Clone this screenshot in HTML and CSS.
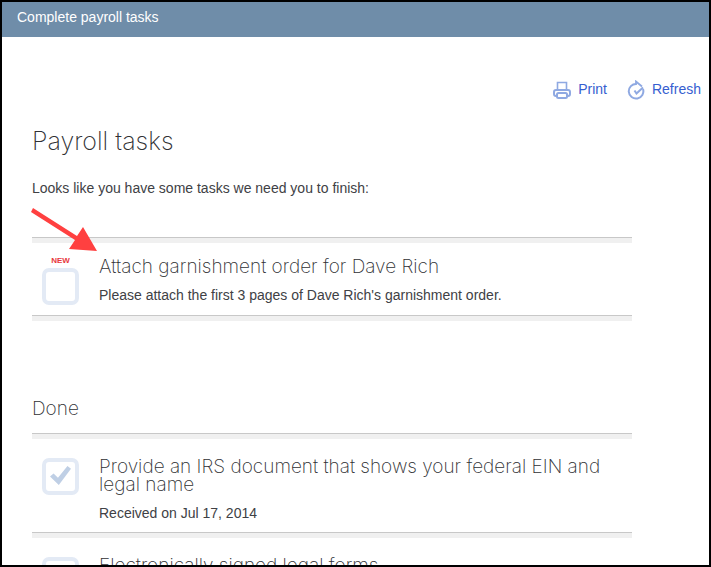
FILE: index.html
```html
<!DOCTYPE html>
<html lang="en">
<head>
    <meta charset="UTF-8">
    <meta name="viewport" content="width=device-width, initial-scale=1.0">
    <title>Complete payroll tasks</title>
    <link rel="stylesheet" href="styles.css">
</head>
<body>
    <header class="title-bar">Complete payroll tasks</header>

    <main>
        <nav class="actions">
            <a href="#print">
                <svg width="18" height="18" viewBox="0 0 18 18" fill="none" stroke="#8fa9e2" stroke-width="2">
                    <path d="M4.500 8V1.500h9V8" stroke-width="1.600"/>
                    <path d="M4 15H3a2 2 0 0 1-2-2v-2a2 2 0 0 1 2-2h12a2 2 0 0 1 2 2v2a2 2 0 0 1-2 2h-1"/>
                    <rect x="4" y="12" width="10" height="5" rx="1.500" fill="#fff"/>
                </svg>
                Print
            </a>
            <a href="#refresh">
                <svg width="18" height="20" viewBox="0 0 18 20" fill="none" stroke="#8fa9e2" stroke-width="2">
                    <path d="M9.500 4A7.300 7.300 0 1 0 16 9"/>
                    <path d="M8.500 1.500L14 6l-4 2z" fill="#fff" stroke="none"/>
                    <path d="M9 5V1.500L15 6.500" stroke-width="1.800"/>
                    <path d="M7.500 10.500l2 3L16 7.500"/>
                </svg>
                Refresh
            </a>
        </nav>

        <h1>Payroll tasks</h1>
        <p class="intro">Looks like you have some tasks we need you to finish:</p>

        <section class="task-list open-tasks">
            <article class="task">
                <div class="task-check">
                    <span class="badge">NEW</span>
                    <input type="checkbox" id="task-garnishment">
                </div>
                <div class="task-text">
                    <h3><label for="task-garnishment">Attach garnishment order for Dave Rich</label></h3>
                    <p>Please attach the first 3 pages of Dave Rich's garnishment order.</p>
                </div>
            </article>
            <svg class="pointer" width="68" height="46" viewBox="0 0 68 46" fill="#ff4040">
                <path d="M3 0l44 28 6-9 14 24-28-2 6-9L1 4z"/>
            </svg>
        </section>

        <h2>Done</h2>

        <section class="task-list">
            <article class="task">
                <div class="task-check">
                    <input type="checkbox" id="task-irs" checked>
                </div>
                <div class="task-text">
                    <h3><label for="task-irs">Provide an IRS document that shows your federal EIN and legal name</label></h3>
                    <p>Received on Jul 17, 2014</p>
                </div>
            </article>
            <article class="task">
                <div class="task-check">
                    <input type="checkbox" id="task-forms" checked>
                </div>
                <div class="task-text">
                    <h3><label for="task-forms">Electronically signed legal forms</label></h3>
                </div>
            </article>
        </section>
    </main>
</body>
</html>
```

FILE: styles.css
```css
* {
    margin: 0;
    padding: 0;
    box-sizing: border-box;
}

body {
    height: 100vh;
    overflow: hidden;
    border: 2px solid #000;
    background: #fff;
    color: #404145;
    font-family: "Liberation Sans", Arial, sans-serif;
    font-size: 14px;
    line-height: 16px;
}

.title-bar {
    padding: 7px 15px 12px;
    background: #6f8da9;
    color: #fff;
}

main {
    padding: 42px 8px 0 30px;
}

.actions {
    display: flex;
    justify-content: flex-end;
    gap: 20px;
}

.actions a {
    display: flex;
    align-items: center;
    gap: 7px;
    height: 20px;
    color: #365ed0;
    text-decoration: none;
}

.actions svg {
    margin-top: 2px;
}

h1,
h2,
h3 {
    color: #303134;
    font-family: Inter, "Helvetica Neue", sans-serif;
    font-weight: 200;
}

h1 {
    margin-top: 26px;
    font-size: 25px;
    line-height: 32px;
}

.intro {
    margin-top: 23px;
}

h2 {
    margin-top: 84px;
    font-size: 19px;
    line-height: 20px;
}

.task-list {
    position: relative;
    margin: 14px 69px 0 0;
}

.open-tasks {
    margin-top: 41px;
}

.task {
    display: flex;
    gap: 20px;
    padding: 16px 0 10px 10px;
}

/* double rule: thin grey line over a pale band */
.task::before,
.open-tasks::after {
    content: "";
    position: absolute;
    left: 0;
    right: 0;
    height: 5px;
    border-top: 1px solid #c8c8c8;
    background: #f0f0f0;
}

.task::before {
    margin-top: -16px;
}

.pointer {
    position: absolute;
    top: -29px;
    left: -2px;
    z-index: 1;
}

.task-check {
    display: flex;
    flex-direction: column;
    flex-shrink: 0;
    padding-top: 9px;
}

.badge {
    height: 15px;
    margin-top: -9px;
    color: #e8383d;
    font-size: 8px;
    font-weight: bold;
    text-align: center;
}

input[type="checkbox"] {
    appearance: none;
    width: 37px;
    height: 37px;
    border: 4px solid #e3eaf5;
    border-radius: 7px;
    background: #fff;
}

input[type="checkbox"]:checked::before {
    content: "";
    display: block;
    width: 21px;
    height: 19px;
    margin: 4px;
    background: #bfcfe5;
    clip-path: polygon(0 55%, 17% 40%, 38% 62%, 83% 0, 100% 14%, 42% 100%);
}

.task-text {
    padding: 9px 0 1px;
}

.open-tasks .task-text {
    padding-top: 5px;
}

h3 {
    font-size: 19px;
    line-height: 18px;
}

.task-text p {
    margin-top: 11px;
}
```
